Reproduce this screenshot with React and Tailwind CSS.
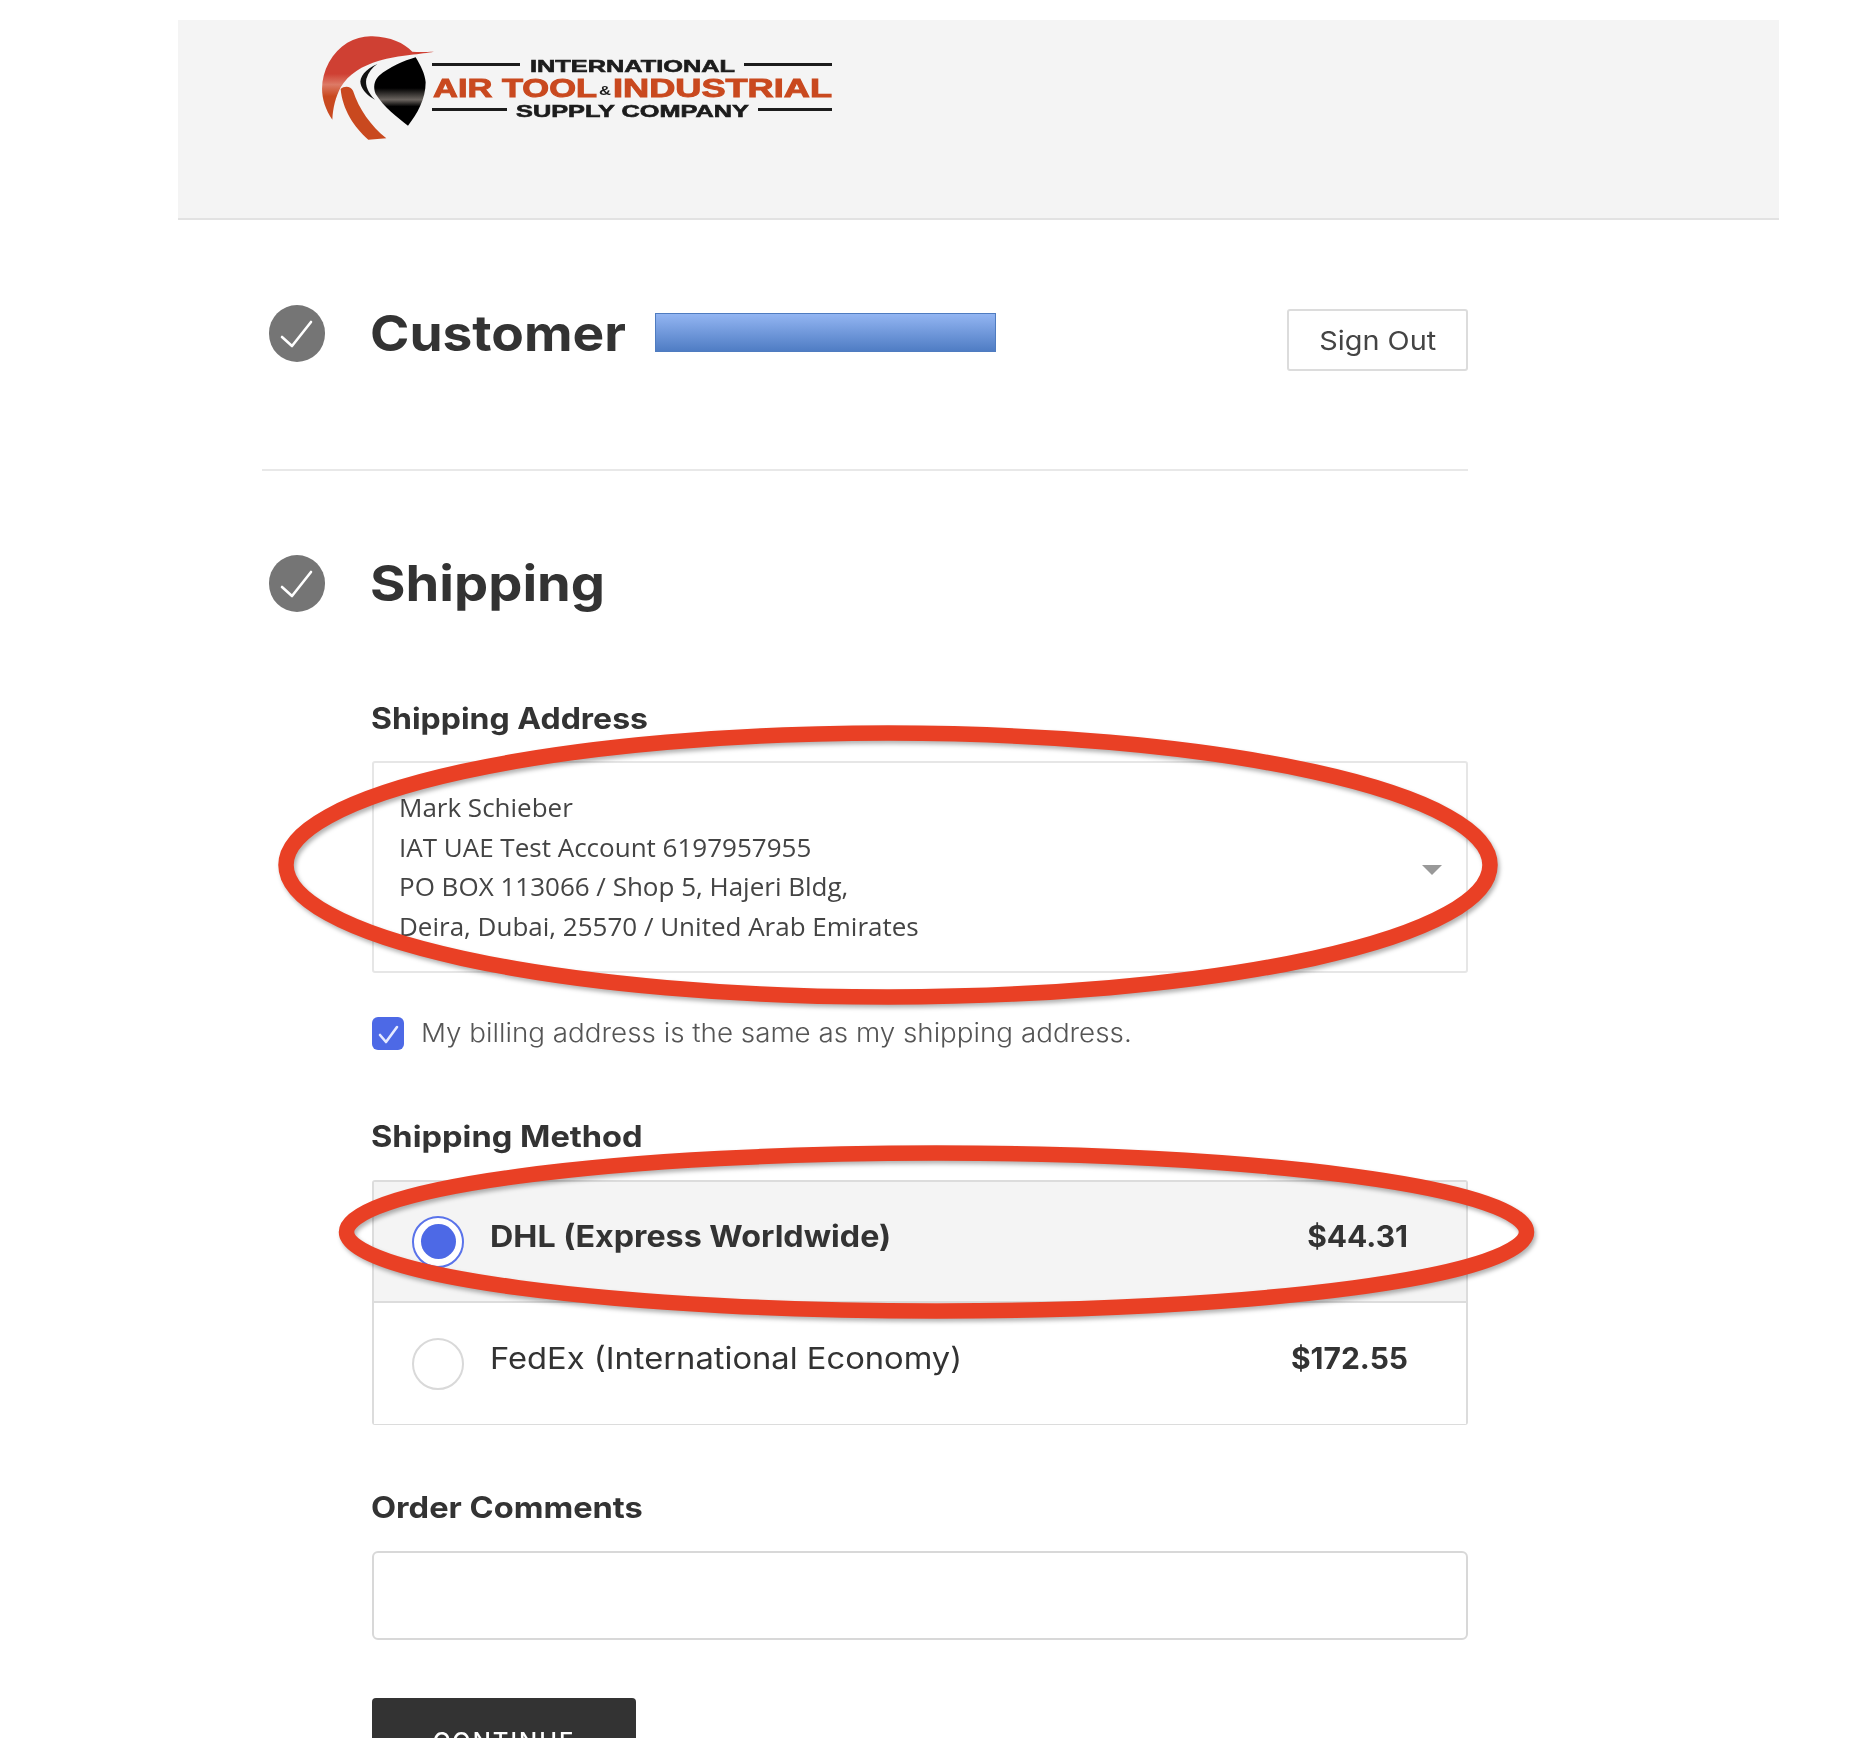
import React from 'react';

const heading = "font-['Inter',sans-serif] font-[650] text-[#333] origin-left";

const Logo = () => (
  <svg width="520" height="120" viewBox="0 0 520 120" className="blur-[0.5px]">
    <defs>
      <linearGradient id="shield" x1="0" y1="0" x2="0" y2="1">
        <stop offset="0.45" stopColor="#000" />
        <stop offset="0.62" stopColor="#6b6560" />
        <stop offset="0.72" stopColor="#000" />
      </linearGradient>
      <linearGradient id="arc" x1="0" y1="0" x2="0" y2="1">
        <stop offset="0.45" stopColor="#cf4033" />
        <stop offset="0.58" stopColor="#dd7a66" />
        <stop offset="0.72" stopColor="#c9491f" />
      </linearGradient>
    </defs>
    <g transform="translate(-11,-9) scale(0.3333)">
      <path d="M70 302C34 250 28 190 60 130C90 76 140 50 190 52C245 54 285 72 310 98C335 100 355 98 375 98C340 105 270 108 210 125C160 140 118 165 95 205C80 235 72 265 70 302Z" fill="url(#arc)" />
      <path d="M95 210C100 270 135 325 178 362L232 358C185 320 150 270 132 215C125 200 105 200 95 210Z" fill="#c9491f" />
      <path d="M320 115C335 140 348 165 350 190C350 240 325 285 297 320C265 295 225 265 200 225C192 205 195 185 210 170C240 145 285 125 320 115Z" fill="url(#shield)" />
      <path d="M205 135C170 150 150 175 155 195C160 215 178 232 198 242C178 222 168 200 172 180C178 160 190 145 205 135Z" fill="#111" />
    </g>
    <g fontFamily="'Liberation Sans', sans-serif" fontWeight="700">
      <rect x="112" y="35" width="88" height="3" fill="#1c1c1c" />
      <rect x="424" y="35" width="88" height="3" fill="#1c1c1c" />
      <text x="210" y="44" fontSize="17" textLength="205" lengthAdjust="spacingAndGlyphs" fill="#1c1c1c" stroke="#1c1c1c" strokeWidth="0.6">INTERNATIONAL</text>
      <text x="113" y="69" fontSize="25" textLength="164" lengthAdjust="spacingAndGlyphs" fill="#c9491f" stroke="#c9491f" strokeWidth="0.9">AIR TOOL</text>
      <text x="279" y="67" fontSize="12" textLength="12" lengthAdjust="spacingAndGlyphs" fill="#1c1c1c">&amp;</text>
      <text x="293" y="69" fontSize="25" textLength="219" lengthAdjust="spacingAndGlyphs" fill="#c9491f" stroke="#c9491f" strokeWidth="0.9">INDUSTRIAL</text>
      <rect x="112" y="80" width="75" height="3" fill="#1c1c1c" />
      <rect x="438" y="80" width="74" height="3" fill="#1c1c1c" />
      <text x="196" y="89" fontSize="17" textLength="233" lengthAdjust="spacingAndGlyphs" fill="#1c1c1c" stroke="#1c1c1c" strokeWidth="0.6">SUPPLY COMPANY</text>
    </g>
  </svg>
);

const StepCheck = () => (
  <div className="flex h-[57px] w-[56px] shrink-0 items-center justify-center rounded-full bg-[#757575]">
    <svg width="36" height="36" viewBox="0 0 36 36" fill="none" stroke="#fff" strokeWidth="2.6" strokeLinecap="round" strokeLinejoin="round">
      <path d="M3 21l10 9L32 6" />
    </svg>
  </div>
);

const Radio = ({ checked }) => (
  <div className={`flex h-[52px] w-[52px] shrink-0 items-center justify-center rounded-full border-2 bg-white ${checked ? 'border-[#5a73ea]' : 'border-[#d9d9d9]'}`}>
    {checked && <div className="h-[35px] w-[35px] rounded-full bg-[#4d69e6]" />}
  </div>
);

const ShipOption = ({ name, price, selected }) => (
  <div className={`flex h-[121px] items-center pl-[38px] pr-[58px] ${selected ? 'bg-[#f4f4f4]' : 'bg-white'}`}>
    <Radio checked={selected} />
    <span className={`ml-[26px] -mt-[11px] origin-left font-['Inter',sans-serif] text-[30px] text-[#333] ${selected ? 'scale-x-[1.075] font-[650]' : 'scale-x-[1.09] font-normal'}`}>{name}</span>
    <span className="ml-auto -mt-[11px] font-['Inter',sans-serif] text-[30px] font-[650] text-[#333]">{price}</span>
  </div>
);

const App = () => {
  return (
    <div className="relative h-[1738px] overflow-hidden bg-white pt-[20px]">
      <div className="ml-[178px] h-[200px] w-[1601px] border-b-2 border-[#e2e2e2] bg-[#f4f4f4] pl-[142px] pt-[8px]">
        <Logo />
      </div>

      <main className="ml-[262px] w-[1206px] blur-[0.4px]">
        <div className="flex h-[251px] items-start border-b-2 border-[#e8e8e8] pl-[7px] pt-[85px]">
          <StepCheck />
          <h2 className={`${heading} ml-[45px] -mt-[1px] w-[285px] scale-x-[1.065] text-[50px] leading-[58px]`}>Customer</h2>
          <div className="mt-[8px] h-[39px] w-[341px] border border-[#4f7cc0] bg-gradient-to-b from-[#93b5f2] to-[#4f7dc4]" />
          <button className="ml-auto mt-[4px] h-[62px] w-[181px] rounded-[3px] border-2 border-[#dcdcdc] font-['Inter',sans-serif] text-[26px] text-[#444]">
            <span className="inline-block scale-x-[1.11]">Sign Out</span>
          </button>
        </div>

        <div className="flex items-center pl-[7px] pt-[84px]">
          <StepCheck />
          <h2 className={`${heading} ml-[45px] -mt-[1px] scale-x-[1.085] text-[50px] leading-[58px]`}>Shipping</h2>
        </div>

        <div className="ml-[110px] pt-[86px]">
          <h3 className={`${heading} -ml-[1px] scale-x-[1.085] text-[29.5px] leading-[40px]`}>Shipping Address</h3>
          <div className="relative mt-[23px] h-[212px] rounded-[3px] border-2 border-[#e6e6e6] pl-[25px] pt-[25px] font-['Open_Sans',sans-serif] text-[26px] leading-[39.5px] text-[#444]">
            <div>Mark Schieber</div>
            <div>IAT UAE Test Account 6197957955</div>
            <div>PO BOX 113066 / Shop 5, Hajeri Bldg,</div>
            <div>Deira, Dubai, 25570 / United Arab Emirates</div>
            <div className="absolute right-[24px] top-[102px] h-0 w-0 border-x-[10px] border-t-[10px] border-x-transparent border-t-[#999]" />
          </div>

          <div className="mt-[42px] flex items-center">
            <div className="flex h-[33px] w-[32px] items-center justify-center rounded-[6px] bg-[#4d69e6]">
              <svg width="32" height="33" viewBox="0 0 32 33" fill="none" stroke="#e6eaff" strokeWidth="2.6" strokeLinecap="round" strokeLinejoin="round">
                <path d="M8 18l6 7L25 10" />
              </svg>
            </div>
            <span className="ml-[17px] -mt-[2px] origin-left scale-x-[1.068] font-['Inter',sans-serif] text-[26px] font-light text-[#555]">My billing address is the same as my shipping address.</span>
          </div>

          <h3 className={`${heading} -ml-[1px] mt-[64px] scale-x-[1.105] text-[29.5px] leading-[40px]`}>Shipping Method</h3>
          <div className="mt-[24px] h-[245px] divide-y-2 divide-[#dcdcdc] rounded-[3px] border-2 border-[#dcdcdc]">
            <ShipOption name="DHL (Express Worldwide)" price="$44.31" selected />
            <ShipOption name="FedEx (International Economy)" price="$172.55" />
          </div>

          <h3 className={`${heading} -ml-[1px] mt-[62px] scale-x-[1.105] text-[29.5px] leading-[40px]`}>Order Comments</h3>
          <div className="mt-[24px] h-[89px] rounded-[6px] border-2 border-[#d8d8d8]" />

          <button className="mt-[58px] h-[92px] w-[264px] rounded-[4px] bg-[#333] pb-[4px] font-['Inter',sans-serif] text-[24px] font-medium tracking-[2px] text-white">CONTINUE</button>
        </div>
      </main>

      {/* hand-drawn annotation rings over the form */}
      <svg className="pointer-events-none absolute left-0 top-0 drop-shadow-[2px_3px_2px_rgba(0,0,0,0.3)]" width="1849" height="1738" fill="none" stroke="#e94025" strokeWidth="15.5">
        <ellipse cx="888" cy="865" rx="602" ry="132" />
        <ellipse cx="936.5" cy="1232" rx="590" ry="79" />
      </svg>
    </div>
  );
};

export default App;
